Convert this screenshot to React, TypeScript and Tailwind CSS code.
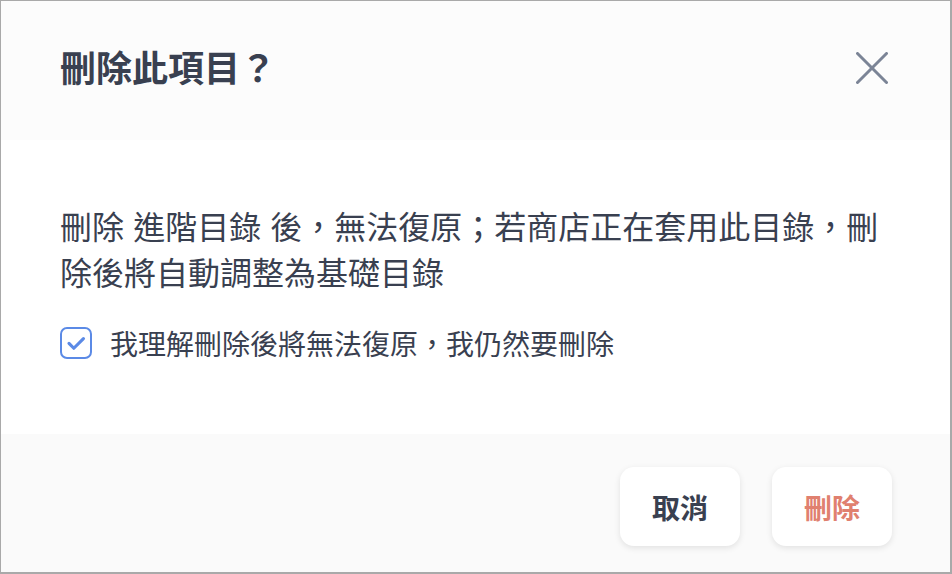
import React from "react";

export default function App() {
  const font = { fontFamily: '"Noto Sans CJK TC", "Noto Sans", sans-serif' };
  return (
    <div
      style={font}
      className="w-[952px] h-[574px] flex flex-col border-l border-t border-r-2 border-b-2 border-[#a9a9a9] bg-white text-[#394050]"
    >
      <div className="h-[139px] shrink-0 bg-[#fcfcfc] flex items-center justify-between pl-[59px] pr-[62px]">
        <h1 className="text-[36px] leading-[44px] font-bold mt-[-9px]">刪除此項目？</h1>
        <button className="w-[32px] h-[32px] mt-[-6px] text-[#7b8496]" aria-label="close">
          <svg viewBox="0 0 32 32" width="32" height="32" fill="none" stroke="currentColor" strokeWidth="3" strokeLinecap="round">
            <line x1="1.5" y1="1.5" x2="30.5" y2="30.5" />
            <line x1="30.5" y1="1.5" x2="1.5" y2="30.5" />
          </svg>
        </button>
      </div>
      <div className="h-[294px] shrink-0 bg-white pl-[59px] pr-[60px] pt-[62px]">
        <p className="text-[32px] leading-[46px] [word-spacing:2px]">
          刪除 進階目錄 後，無法復原；若商店正在套用此目錄，刪除後將自動調整為基礎目錄
        </p>
        <label className="mt-[29px] flex items-center gap-[18px]">
          <span className="w-[32px] h-[32px] shrink-0 rounded-[7px] border-2 border-[#5b8ae6] flex items-center justify-center">
            <svg viewBox="0 0 32 32" width="32" height="32" fill="none" stroke="#5b8ae6" strokeWidth="3.6" strokeLinecap="round" strokeLinejoin="round">
              <polyline points="8,16.5 13.5,22 24.5,11" />
            </svg>
          </span>
          <span className="text-[28px] leading-[40px]">我理解刪除後將無法復原，我仍然要刪除</span>
        </label>
      </div>
      <div className="flex-1 bg-[#fafafa] flex justify-end items-start gap-[32px] pt-[33px] pr-[58px]">
        <button className="w-[120px] h-[79px] rounded-[14px] bg-white shadow-[0_2px_6px_rgba(0,0,0,0.10)] text-[28px] font-bold text-[#394050]">
          取消
        </button>
        <button className="w-[120px] h-[79px] rounded-[14px] bg-white shadow-[0_2px_6px_rgba(0,0,0,0.10)] text-[28px] font-bold text-[#e0806f]">
          刪除
        </button>
      </div>
    </div>
  );
}
